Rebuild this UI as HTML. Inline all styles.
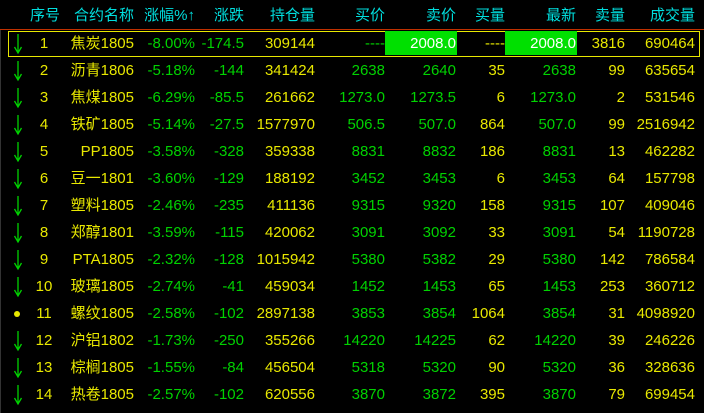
<!DOCTYPE html><html><head><meta charset="utf-8"><style>
body{margin:0;width:704px;height:413px;background:#000;overflow:hidden;font-family:"Liberation Sans","Noto Sans CJK SC",sans-serif;font-size:15px;position:relative}
.r{position:absolute;left:0;height:27px;line-height:27px;width:704px}
.r span{position:absolute;top:0;text-align:right;white-space:nowrap}
.y{color:#e8e800}.g{color:#00d200}.c{color:#00dede}
.i{left:30px;width:28px;text-align:center!important}
.n{left:58px;width:76px}.p{left:134px;width:61px}.d{left:195px;width:49px}.o{left:244px;width:71px}
.b{left:315px;width:70px}.s{left:385px;width:71px}.bq{left:456px;width:49px}.l{left:505px;width:71px}.aq{left:576px;width:49px}.v{left:625px;width:70px}
.hl{background:#00e000;color:#fff;top:1px!important;height:24px;line-height:25px;padding-right:1px}
</style></head><body>
<div style="position:absolute;left:0;top:29px;width:704px;height:1px;background:#c03000"></div>
<div style="position:absolute;left:0;top:30px;width:1px;height:383px;background:#333"></div>
<div class="r c" style="top:2px"><span class="i" style="left:26px;width:38px">序号</span><span class="n">合约名称</span><span class="p">涨幅%↑</span><span class="d">涨跌</span><span class="o">持仓量</span><span class="b">买价</span><span class="s">卖价</span><span class="bq">买量</span><span class="l">最新</span><span class="aq">卖量</span><span class="v">成交量</span></div>
<div style="position:absolute;left:8px;top:31px;width:692px;height:26px;border:1px solid #e8e800;box-sizing:border-box"></div>
<div id="rows"></div>
<script>
var D=[
["1","焦炭1805","-8.00%","-174.5","309144","----","2008.0","----","2008.0","3816","690464"],
["2","沥青1806","-5.18%","-144","341424","2638","2640","35","2638","99","635654"],
["3","焦煤1805","-6.29%","-85.5","261662","1273.0","1273.5","6","1273.0","2","531546"],
["4","铁矿1805","-5.14%","-27.5","1577970","506.5","507.0","864","507.0","99","2516942"],
["5","PP1805","-3.58%","-328","359338","8831","8832","186","8831","13","462282"],
["6","豆一1801","-3.60%","-129","188192","3452","3453","6","3453","64","157798"],
["7","塑料1805","-2.46%","-235","411136","9315","9320","158","9315","107","409046"],
["8","郑醇1801","-3.59%","-115","420062","3091","3092","33","3091","54","1190728"],
["9","PTA1805","-2.32%","-128","1015942","5380","5382","29","5380","142","786584"],
["10","玻璃1805","-2.74%","-41","459034","1452","1453","65","1453","253","360712"],
["11","螺纹1805","-2.58%","-102","2897138","3853","3854","1064","3854","31","4098920"],
["12","沪铝1802","-1.73%","-250","355266","14220","14225","62","14220","39","246226"],
["13","棕榈1805","-1.55%","-84","456504","5318","5320","90","5320","36","328636"],
["14","热卷1805","-2.57%","-102","620556","3870","3872","395","3870","79","699454"]];
var arrow='<svg width="10" height="22" style="position:absolute;left:13px;top:3px"><path d="M5 1V20M1.5 14L5 20L8.5 14" stroke="#00d200" stroke-width="1.3" fill="none"/></svg>';
var dot='<svg width="10" height="22" style="position:absolute;left:12px;top:3px"><circle cx="5" cy="11" r="3" fill="#e8e800"/></svg>';
var h='';
D.forEach(function(r,k){var t=30+k*27;
h+='<div class="r" style="top:'+t+'px">'+(k==10?dot:arrow)+
'<span class="i y">'+r[0]+'</span><span class="n y">'+r[1]+'</span><span class="p g">'+r[2]+'</span><span class="d g">'+r[3]+'</span><span class="o y">'+r[4]+'</span><span class="b '+(k==0?'g':'g')+'">'+r[5]+'</span>'+
'<span class="s '+(k==0?'hl':'g')+'">'+r[6]+'</span><span class="bq y">'+r[7]+'</span><span class="l '+(k==0?'hl':'g')+'">'+r[8]+'</span><span class="aq y">'+r[9]+'</span><span class="v y">'+r[10]+'</span></div>';});
document.getElementById('rows').innerHTML=h;
</script>
</body></html>
